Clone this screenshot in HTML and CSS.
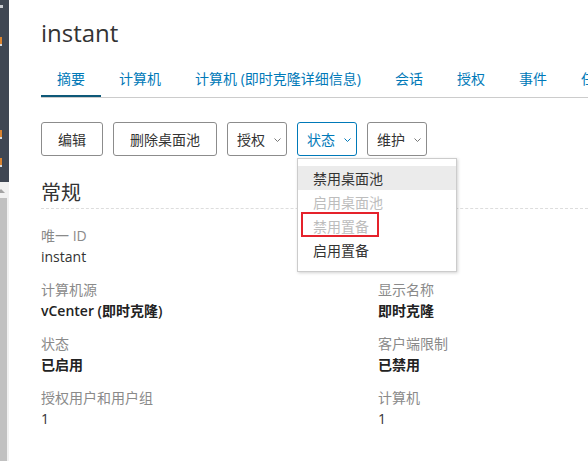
FILE: index.html
```html
<!DOCTYPE html>
<html lang="zh-CN">
<head>
<meta charset="utf-8">
<title>instant</title>
<link rel="stylesheet" href="styles.css">
</head>
<body>
<div class="app">
  <aside class="rail">
    <div class="rail-nav">
      <span class="frag frag-check"></span>
      <span class="frag frag-orange f1"></span>
      <span class="frag frag-orange f2"></span>
      <span class="frag frag-orange f3"></span>
    </div>
    <div class="scroll">
      <span class="scroll-arrow"></span>
      <span class="scroll-thumb"></span>
    </div>
  </aside>
  <main class="main">
    <h1 class="title">instant</h1>
    <nav class="tabs">
      <a class="tab active">摘要</a>
      <a class="tab">计算机</a>
      <a class="tab">计算机 (即时克隆详细信息)</a>
      <a class="tab">会话</a>
      <a class="tab">授权</a>
      <a class="tab">事件</a>
      <a class="tab">任务</a>
    </nav>
    <div class="toolbar">
      <button class="btn">编辑</button>
      <button class="btn">删除桌面池</button>
      <button class="btn btn-dd">授权<svg class="chev" viewBox="0 0 7 4" width="7" height="4"><polyline points="0.5,0.5 3.5,3.5 6.5,0.5"/></svg></button>
      <div class="dd">
        <button class="btn btn-dd is-open">状态<svg class="chev" viewBox="0 0 7 4" width="7" height="4"><polyline points="0.5,0.5 3.5,3.5 6.5,0.5"/></svg></button>
        <div class="menu">
          <span class="menu-item hl">禁用桌面池</span>
          <span class="menu-item disabled">启用桌面池</span>
          <span class="menu-item disabled">禁用置备</span>
          <span class="menu-item">启用置备</span>
          <span class="annot"></span>
        </div>
      </div>
      <button class="btn btn-dd">维护<svg class="chev" viewBox="0 0 7 4" width="7" height="4"><polyline points="0.5,0.5 3.5,3.5 6.5,0.5"/></svg></button>
    </div>
    <section class="general">
      <h2 class="section-title">常规</h2>
      <div class="fields">
        <div class="field"><div class="label">唯一 ID</div><div class="value">instant</div></div>
        <div class="field"><div class="label">描述</div><div class="value">-</div></div>
        <div class="field"><div class="label">计算机源</div><div class="value strong">vCenter (即时克隆)</div></div>
        <div class="field"><div class="label">显示名称</div><div class="value strong">即时克隆</div></div>
        <div class="field"><div class="label">状态</div><div class="value strong">已启用</div></div>
        <div class="field"><div class="label">客户端限制</div><div class="value strong">已禁用</div></div>
        <div class="field"><div class="label">授权用户和用户组</div><div class="value">1</div></div>
        <div class="field"><div class="label">计算机</div><div class="value">1</div></div>
      </div>
    </section>
  </main>
</div>
</body>
</html>
```

FILE: styles.css
```css
html, body {
  margin: 0;
  padding: 0;
  background: #fff;
}
body {
  font-family: "Open Sans", "Noto Sans CJK SC", sans-serif;
  font-size: 14px;
  color: #333;
  overflow: hidden;
}
.app {
  display: flex;
  height: 461px;
  width: 588px;
  overflow: hidden;
}
.rail {
  width: 9px;
  flex-shrink: 0;
  display: flex;
  flex-direction: column;
}
.rail-nav {
  height: 182px;
  background: #3f4753;
  display: flex;
  flex-direction: column;
  align-items: flex-start;
  padding-top: 5px;
  box-sizing: border-box;
}
.frag { display: block; }
.frag-check {
  width: 3px;
  height: 3px;
  background: #c9ccd1;
}
.frag-orange {
  width: 2px;
  height: 7px;
  background: #d98330;
  border-bottom: 2px solid #d6d9dd;
}
.f1 { margin-top: 29px; }
.f2 { margin-top: 84px; }
.f3 { margin-top: 19px; }
.scroll {
  flex: 1;
  background: #f1f1f1;
  display: flex;
  flex-direction: column;
  align-items: flex-start;
  padding-top: 7px;
}
.scroll-arrow {
  display: block;
  width: 0;
  height: 0;
  margin-left: -3px;
  border-left: 4px solid transparent;
  border-right: 4px solid transparent;
  border-bottom: 4px solid #a3a3a3;
}
.scroll-thumb {
  display: block;
  margin-top: 5px;
  width: 7px;
  flex: 1;
  background: #c1c1c1;
}
.main {
  flex: 1;
  min-width: 0;
  padding-left: 32px;
  overflow: hidden;
}
.title {
  margin: 17px 0 0;
  font-size: 24px;
  line-height: 32px;
  font-weight: 400;
  color: #333;
}
.tabs {
  display: flex;
  margin-top: 11px;
  border-bottom: 1px solid #ccc;
  overflow: hidden;
}
.tab {
  flex-shrink: 0;
  padding: 9px 16px 9px;
  margin-right: 2px;
  margin-bottom: -1px;
  line-height: 20px;
  color: #0079b8;
  white-space: nowrap;
  cursor: pointer;
}
.tab.active {
  box-shadow: inset 0 -3px 0 #0d5878;
}
.toolbar {
  display: flex;
  gap: 10px;
  margin-top: 24px;
  align-items: flex-start;
}
.btn {
  height: 34px;
  box-sizing: border-box;
  border: 1px solid #8c8c8c;
  border-radius: 3px;
  background: #fff;
  padding: 1px 16px 0;
  font-family: inherit;
  font-size: 14px;
  line-height: 20px;
  color: #333;
  display: inline-flex;
  align-items: center;
  margin: 0;
}
.btn-dd {
  padding: 1px 5px 0 9px;
  gap: 9px;
}
.chev {
  fill: none;
  stroke: #777;
  stroke-width: 1;
}
.btn.is-open {
  border-color: #0079b8;
  color: #0079b8;
}
.btn.is-open .chev { stroke: #0079b8; }
.dd { position: relative; }
.menu {
  position: absolute;
  top: 36px;
  left: 0;
  width: 160px;
  box-sizing: border-box;
  border: 1px solid #ccc;
  padding: 7px 0 9px;
  background: #fff;
  box-shadow: 1px 1px 3px rgba(0, 0, 0, 0.18);
  z-index: 5;
}
.menu-item {
  display: block;
  padding: 1px 15px 0;
  height: 24px;
  box-sizing: border-box;
  line-height: 24px;
  color: #333;
  white-space: nowrap;
}
.menu-item.hl { background: #ebebeb; }
.menu-item.disabled { color: #bdbdbd; }
.annot {
  position: absolute;
  left: 3px;
  top: 53px;
  width: 78px;
  height: 25px;
  box-sizing: border-box;
  border: 2px solid #e5222b;
}
.section-title {
  margin: 23px 0 0;
  font-size: 20px;
  line-height: 28px;
  padding-bottom: 1px;
  font-weight: 400;
  color: #333;
  border-bottom: 1px dashed #ddd;
}
.fields {
  display: grid;
  grid-template-columns: 337px 1fr;
  row-gap: 13px;
  margin-top: 17px;
}
.label {
  line-height: 20px;
  color: #8a8a8a;
}
.value {
  line-height: 21px;
  color: #333;
}
.value.strong {
  font-weight: 600;
  color: #222;
}
```
